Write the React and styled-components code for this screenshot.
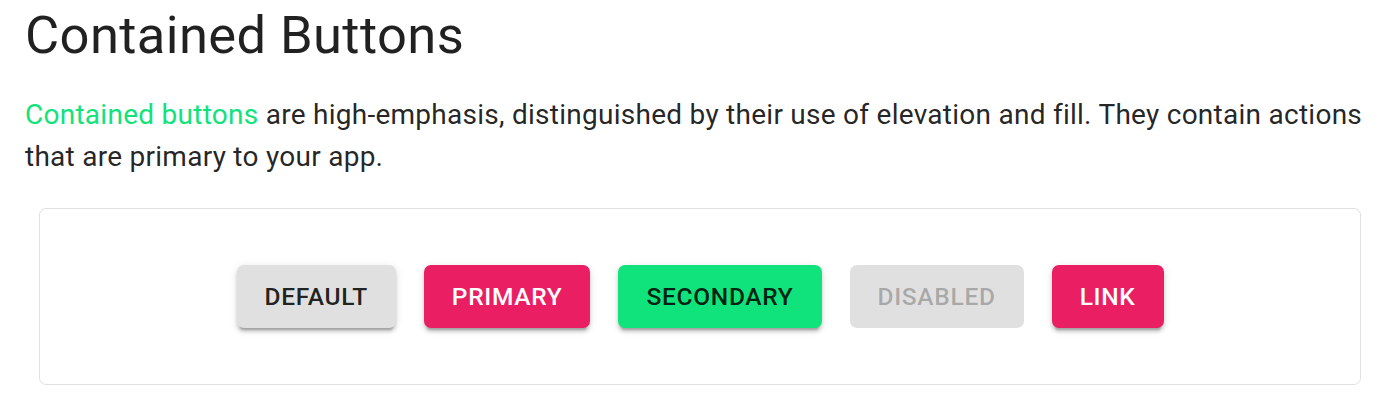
import React from "react";
import styled, { createGlobalStyle } from "styled-components";

const GlobalStyle = createGlobalStyle`
    body {
        margin: 0;
        background: #fff;
        font-family: Roboto, "Liberation Sans", sans-serif;
        color: rgba(0, 0, 0, 0.87);
    }
`;

const Page = styled.div`
    width: 1350px;
    padding: 4px 25px 0 25px;
`;

const Title = styled.h1`
    margin: 0;
    font-size: 52.5px;
    font-weight: 400;
    line-height: 63px;
    letter-spacing: 0.00735em;
    color: rgba(0, 0, 0, 0.87);
`;

const Lead = styled.p`
    margin: 27px 0 0 0;
    font-size: 28px;
    font-weight: 400;
    line-height: 42px;
    letter-spacing: 0.00938em;
    color: rgba(0, 0, 0, 0.87);
`;

const Highlight = styled.a`
    color: #10e37b;
    text-decoration: none;
`;

const Demo = styled.div`
    margin: 30px 14px 0 14px;
    padding: 42px;
    border: 1px solid #e0e0e0;
    border-radius: 7px;
    display: flex;
    justify-content: center;
    align-items: center;
`;

const palette = {
    default: { bg: "#e0e0e0", fg: "rgba(0, 0, 0, 0.87)" },
    primary: { bg: "#e91e63", fg: "#fff" },
    secondary: { bg: "#10e37b", fg: "rgba(0, 0, 0, 0.87)" },
    disabled: { bg: "rgba(0, 0, 0, 0.12)", fg: "rgba(0, 0, 0, 0.26)" },
};

const Button = styled.button`
    margin: 14px;
    height: 63px;
    padding: 0 28px;
    border: 0;
    border-radius: 7px;
    font-family: Roboto, "Liberation Sans", sans-serif;
    font-size: 24.5px;
    font-weight: 500;
    letter-spacing: 0.7px;
    text-transform: uppercase;
    background: ${(props) => palette[props.$variant].bg};
    color: ${(props) => palette[props.$variant].fg};
    box-shadow: ${(props) =>
        props.$variant === "disabled"
            ? "none"
            : "0px 5px 2px -3.5px rgba(0,0,0,0.2), 0px 3.5px 3.5px 0px rgba(0,0,0,0.14), 0px 2px 9px 0px rgba(0,0,0,0.12)"};
    cursor: ${(props) => (props.$variant === "disabled" ? "default" : "pointer")};
`;

export default function App() {
    return (
        <>
            <GlobalStyle />
            <Page>
                <Title>Contained Buttons</Title>
                <Lead>
                    <Highlight href="#">Contained buttons</Highlight> are high-emphasis, distinguished by their use of elevation and fill. They contain actions that are primary to your app.
                </Lead>
                <Demo>
                    <Button $variant="default">Default</Button>
                    <Button $variant="primary">Primary</Button>
                    <Button $variant="secondary">Secondary</Button>
                    <Button $variant="disabled" disabled>Disabled</Button>
                    <Button $variant="primary">Link</Button>
                </Demo>
            </Page>
        </>
    );
}
